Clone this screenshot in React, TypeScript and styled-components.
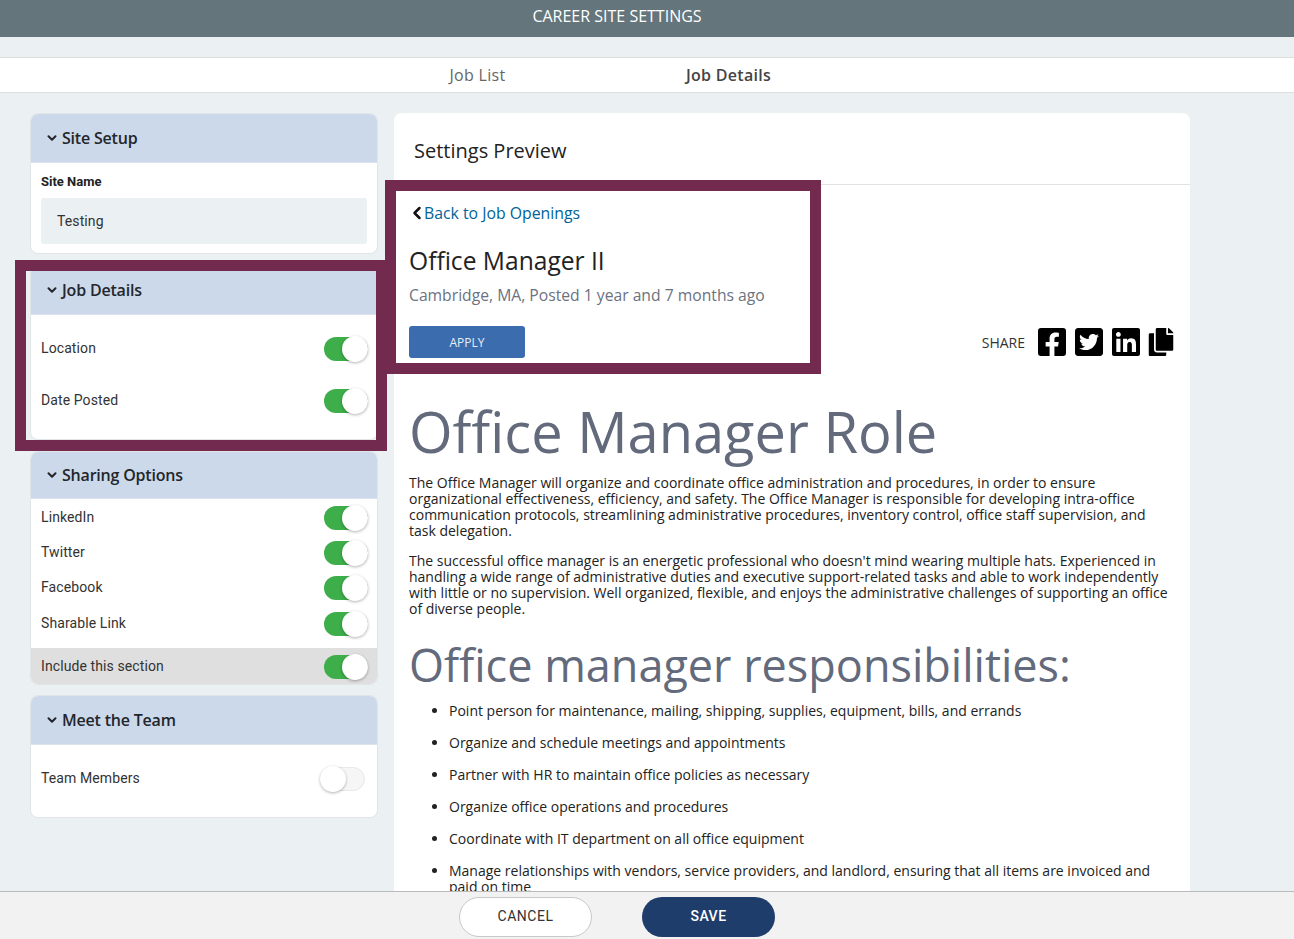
import React from "react";
import styled, { createGlobalStyle } from "styled-components";
import { ChevronDown, ChevronLeft } from "lucide-react";
import { FaCopy, FaFacebookSquare, FaLinkedin, FaTwitterSquare } from "react-icons/fa";

const GlobalStyle = createGlobalStyle`
  html, body {
    margin: 0;
    padding: 0;
    height: 100%;
    overflow: hidden;
    background: #ebf0f3;
    font-family: "Open Sans", "Liberation Sans", sans-serif;
  }
  * {
    box-sizing: border-box;
  }
`;

const responsibilities = [
  "Point person for maintenance, mailing, shipping, supplies, equipment, bills, and errands",
  "Organize and schedule meetings and appointments",
  "Partner with HR to maintain office policies as necessary",
  "Organize office operations and procedures",
  "Coordinate with IT department on all office equipment",
  "Manage relationships with vendors, service providers, and landlord, ensuring that all items are invoiced and paid on time",
];

const Switch = ({ on = true }: { on?: boolean }) => (
  <SwitchTrack $on={on}>
    <SwitchKnob $on={on} />
  </SwitchTrack>
);

const App = () => {
  return (
    <Page>
      <GlobalStyle />
      <TopBar>CAREER SITE SETTINGS</TopBar>
      <Tabs>
        <Tab>Job List</Tab>
        <Tab $active>Job Details</Tab>
      </Tabs>
      <Main>
        <Sidebar>
          <Card>
            <CardHeader $height={49}>
              <ChevronDown size={14} strokeWidth={3.5} />
              Site Setup
            </CardHeader>
            <SiteBody>
              <FieldLabel>Site Name</FieldLabel>
              <TextField>Testing</TextField>
            </SiteBody>
          </Card>

          <Card $top={11} $height={175}>
            <CardHeader $height={49}>
              <ChevronDown size={14} strokeWidth={3.5} />
              Job Details
            </CardHeader>
            <RowList $height={52} $top={7}>
              <Row>
                Location
                <Switch />
              </Row>
              <Row>
                Date Posted
                <Switch />
              </Row>
            </RowList>
          </Card>

          <Card $top={11}>
            <CardHeader $height={47}>
              <ChevronDown size={14} strokeWidth={3.5} />
              Sharing Options
            </CardHeader>
            <RowList $height={35.4} $bottom={7}>
              <Row>
                LinkedIn
                <Switch />
              </Row>
              <Row>
                Twitter
                <Switch />
              </Row>
              <Row>
                Facebook
                <Switch />
              </Row>
              <Row>
                Sharable Link
                <Switch />
              </Row>
            </RowList>
            <IncludeRow>
              Include this section
              <Switch />
            </IncludeRow>
          </Card>

          <Card $top={10}>
            <CardHeader $height={49}>
              <ChevronDown size={14} strokeWidth={3.5} />
              <strong>Meet the Team</strong>
            </CardHeader>
            <RowList $height={66} $bottom={6}>
              <Row>
                Team Members
                <Switch on={false} />
              </Row>
            </RowList>
          </Card>
        </Sidebar>

        <Preview>
          <PreviewTitle>Settings Preview</PreviewTitle>
          <PreviewBody>
            <JobHead>
              <div>
                <BackLink>
                  <ChevronLeft size={20} strokeWidth={3} color="#111" />
                  Back to Job Openings
                </BackLink>
                <JobTitle>Office Manager II</JobTitle>
                <JobMeta>Cambridge, MA, Posted 1 year and 7 months ago</JobMeta>
                <ApplyButton>APPLY</ApplyButton>
              </div>
              <Share>
                <ShareLabel>SHARE</ShareLabel>
                <FaFacebookSquare size={32} />
                <FaTwitterSquare size={32} />
                <FaLinkedin size={32} />
                <FaCopy size={28} />
              </Share>
            </JobHead>

            <Heading>Office Manager Role</Heading>
            <Paragraph>
              The Office Manager will organize and coordinate office administration and procedures, in order to ensure
              organizational effectiveness, efficiency, and safety. The Office Manager is responsible for developing
              intra-office communication protocols, streamlining administrative procedures, inventory control, office
              staff supervision, and task delegation.
            </Paragraph>
            <Paragraph>
              The successful office manager is an energetic professional who doesn't mind wearing multiple hats.
              Experienced in handling a wide range of administrative duties and executive support-related tasks and able
              to work independently with little or no supervision. Well organized, flexible, and enjoys the
              administrative challenges of supporting an office of diverse people.
            </Paragraph>
            <SubHeading>Office manager responsibilities:</SubHeading>
            <Duties>
              {responsibilities.map((item) => (
                <li key={item}>{item}</li>
              ))}
            </Duties>
          </PreviewBody>
        </Preview>
      </Main>
      <Footer>
        <CancelButton>CANCEL</CancelButton>
        <SaveButton>SAVE</SaveButton>
      </Footer>
      <JobDetailsFrame />
      <JobHeadFrame />
    </Page>
  );
};

const Page = styled.div`
  position: relative;
  width: 1294px;
  height: 939px;
  display: flex;
  flex-direction: column;
  overflow: hidden;
  background: #ebf0f3;
`;

const TopBar = styled.header`
  flex: none;
  height: 37px;
  padding: 0 60px 5px 0;
  display: flex;
  align-items: center;
  justify-content: center;
  background: #64757c;
  color: #fff;
  font-size: 16px;
`;

const Tabs = styled.nav`
  flex: none;
  height: 36px;
  margin-top: 20px;
  padding-left: 352px;
  display: flex;
  background: #fff;
  border-top: 1px solid #dedede;
  border-bottom: 1px solid #dedede;
`;

const Tab = styled.div<{ $active?: boolean }>`
  width: 251px;
  display: flex;
  align-items: center;
  justify-content: center;
  font-size: 16px;
  letter-spacing: 0.3px;
  font-weight: ${({ $active }) => ($active ? 600 : 400)};
  color: ${({ $active }) => ($active ? "#444" : "#666")};
`;

const Main = styled.main`
  flex: 1;
  min-height: 0;
  padding: 20px 0 0 30px;
  display: flex;
  gap: 16px;
  overflow: hidden;
`;

const Sidebar = styled.aside`
  flex: none;
  width: 348px;
  display: flex;
  flex-direction: column;
`;

const Card = styled.section<{ $top?: number; $height?: number }>`
  margin-top: ${({ $top }) => $top ?? 0}px;
  ${({ $height }) => ($height ? `height: ${$height}px;` : "")}
  background: #fff;
  border: 1px solid #e2e5e8;
  border-radius: 8px;
  overflow: hidden;
`;

const CardHeader = styled.h3<{ $height: number }>`
  margin: 0;
  height: ${({ $height }) => $height}px;
  padding-left: 14px;
  display: flex;
  align-items: center;
  gap: 3px;
  background: #ccd9ea;
  border-bottom: 1px solid #dde3ea;
  color: #23262b;
  font-size: 16px;
  font-weight: 600;
  letter-spacing: -0.2px;

  strong {
    font-weight: 600;
  }
`;

const SiteBody = styled.div`
  padding: 11px 10px 9px;
`;

const FieldLabel = styled.div`
  height: 16px;
  margin-bottom: 8px;
  font-family: Roboto, sans-serif;
  font-size: 13px;
  line-height: 16px;
  font-weight: 700;
  color: #222;
`;

const TextField = styled.div`
  height: 46px;
  padding-left: 16px;
  display: flex;
  align-items: center;
  background: #ebf0f3;
  border-radius: 3px;
  font-family: Roboto, sans-serif;
  font-size: 14px;
  letter-spacing: 0.1px;
  color: #333;
`;

const RowList = styled.div<{ $height: number; $top?: number; $bottom?: number }>`
  padding-top: ${({ $top }) => $top ?? 0}px;
  padding-bottom: ${({ $bottom }) => $bottom ?? 0}px;
  display: grid;
  grid-auto-rows: ${({ $height }) => $height}px;
`;

const Row = styled.div`
  padding: 0 9px 0 10px;
  display: flex;
  align-items: center;
  justify-content: space-between;
  font-family: Roboto, sans-serif;
  font-size: 14px;
  letter-spacing: 0.1px;
  color: #333;
`;

const IncludeRow = styled(Row)`
  height: 37px;
  margin: 0 -1px -1px;
  padding: 0 10px 0 11px;
  background: #dfdfdf;
`;

const SwitchTrack = styled.span<{ $on: boolean }>`
  position: relative;
  flex: none;
  width: ${({ $on }) => ($on ? 44 : 45)}px;
  height: 24px;
  margin: 2px ${({ $on }) => ($on ? 0 : 3)}px 0 0;
  border-radius: 12px;
  background: ${({ $on }) => ($on ? "#3dae49" : "#f6f6f6")};
  border: ${({ $on }) => ($on ? "none" : "1px solid #e8e8e8")};
`;

const SwitchKnob = styled.span<{ $on: boolean }>`
  position: absolute;
  top: ${({ $on }) => ($on ? -1 : -2)}px;
  ${({ $on }) => ($on ? "right: 0;" : "left: -1px;")}
  width: 26px;
  height: 26px;
  border-radius: 50%;
  background: #fff;
  box-shadow: 0 1px 3px rgba(0, 0, 0, 0.3);
`;

const Preview = styled.section`
  flex: none;
  width: 796px;
  background: #fff;
  border-radius: 8px 8px 0 0;
  overflow: hidden;
`;

const PreviewTitle = styled.h2`
  margin: 0;
  height: 72px;
  padding: 3px 0 0 20px;
  display: flex;
  align-items: center;
  border-bottom: 1px solid #e2e2e2;
  font-size: 20px;
  font-weight: 400;
  color: #222;
`;

const PreviewBody = styled.div`
  padding: 0 15px 0 15px;
`;

const JobHead = styled.div`
  display: flex;
  align-items: flex-end;
  justify-content: space-between;
  height: 173px;
`;

const BackLink = styled.a`
  display: flex;
  align-items: center;
  height: 22px;
  margin-top: 14px;
  color: #00639a;
  font-size: 15.8px;

  svg {
    margin: 0 -2.5px 0 -2.5px;
  }
`;

const JobTitle = styled.h1`
  margin: 19px 0 0;
  height: 35px;
  font-size: 24.6px;
  line-height: 35px;
  font-weight: 400;
  color: #222;
`;

const JobMeta = styled.div`
  margin-top: 6px;
  height: 22px;
  font-size: 15.7px;
  line-height: 22px;
  color: #6b7280;
`;

const ApplyButton = styled.button`
  display: block;
  width: 116px;
  height: 32px;
  margin-top: 20px;
  border: none;
  border-radius: 3px;
  background: #3a6cae;
  color: #e8eef6;
  font-family: inherit;
  font-size: 12px;
`;

const Share = styled.div`
  height: 32px;
  display: flex;
  align-items: center;
  gap: 5px;
  color: #000;
`;

const ShareLabel = styled.span`
  margin-right: 6px;
  font-size: 14px;
  color: #333;
`;

const Heading = styled.h1`
  margin: 37px 0 0;
  height: 72px;
  font-size: 56px;
  line-height: 72px;
  font-weight: 400;
  color: #626a7c;
`;

const Paragraph = styled.p`
  margin: 8px 0 0;
  font-size: 14px;
  line-height: 16px;
  color: #222;

  & + & {
    margin-top: 14px;
  }
`;

const SubHeading = styled.h2`
  margin: 18px 0 0;
  height: 60px;
  font-size: 45px;
  line-height: 60px;
  font-weight: 400;
  color: #626a7c;
`;

const Duties = styled.ul`
  margin: 8px 0 0;
  padding-left: 40px;
  font-size: 14px;
  line-height: 16px;
  color: #222;

  li {
    margin-bottom: 16px;
  }
`;

const Footer = styled.footer`
  position: absolute;
  left: 0;
  right: 0;
  bottom: 0;
  height: 48px;
  padding: 5px 60px 0 0;
  display: flex;
  justify-content: center;
  gap: 50px;
  background: #f2f2f2;
  border-top: 1px solid #bbb;
`;

const FooterButton = styled.button`
  width: 133px;
  height: 40px;
  padding-bottom: 4px;
  border-radius: 20px;
  font-family: Roboto, sans-serif;
  font-size: 14px;
  letter-spacing: 0.5px;
`;

const CancelButton = styled(FooterButton)`
  background: #fff;
  border: 1px solid #c8c8c8;
  color: #333;
`;

const SaveButton = styled(FooterButton)`
  background: #1f3d6b;
  border: none;
  color: #fff;
  font-weight: 500;
`;

const Frame = styled.div`
  position: absolute;
  border: 11px solid #722b4f;
  pointer-events: none;
`;

const JobDetailsFrame = styled(Frame)`
  left: 15px;
  top: 260px;
  width: 372px;
  height: 191px;
`;

const JobHeadFrame = styled(Frame)`
  left: 385px;
  top: 180px;
  width: 436px;
  height: 194px;
`;

export default App;
